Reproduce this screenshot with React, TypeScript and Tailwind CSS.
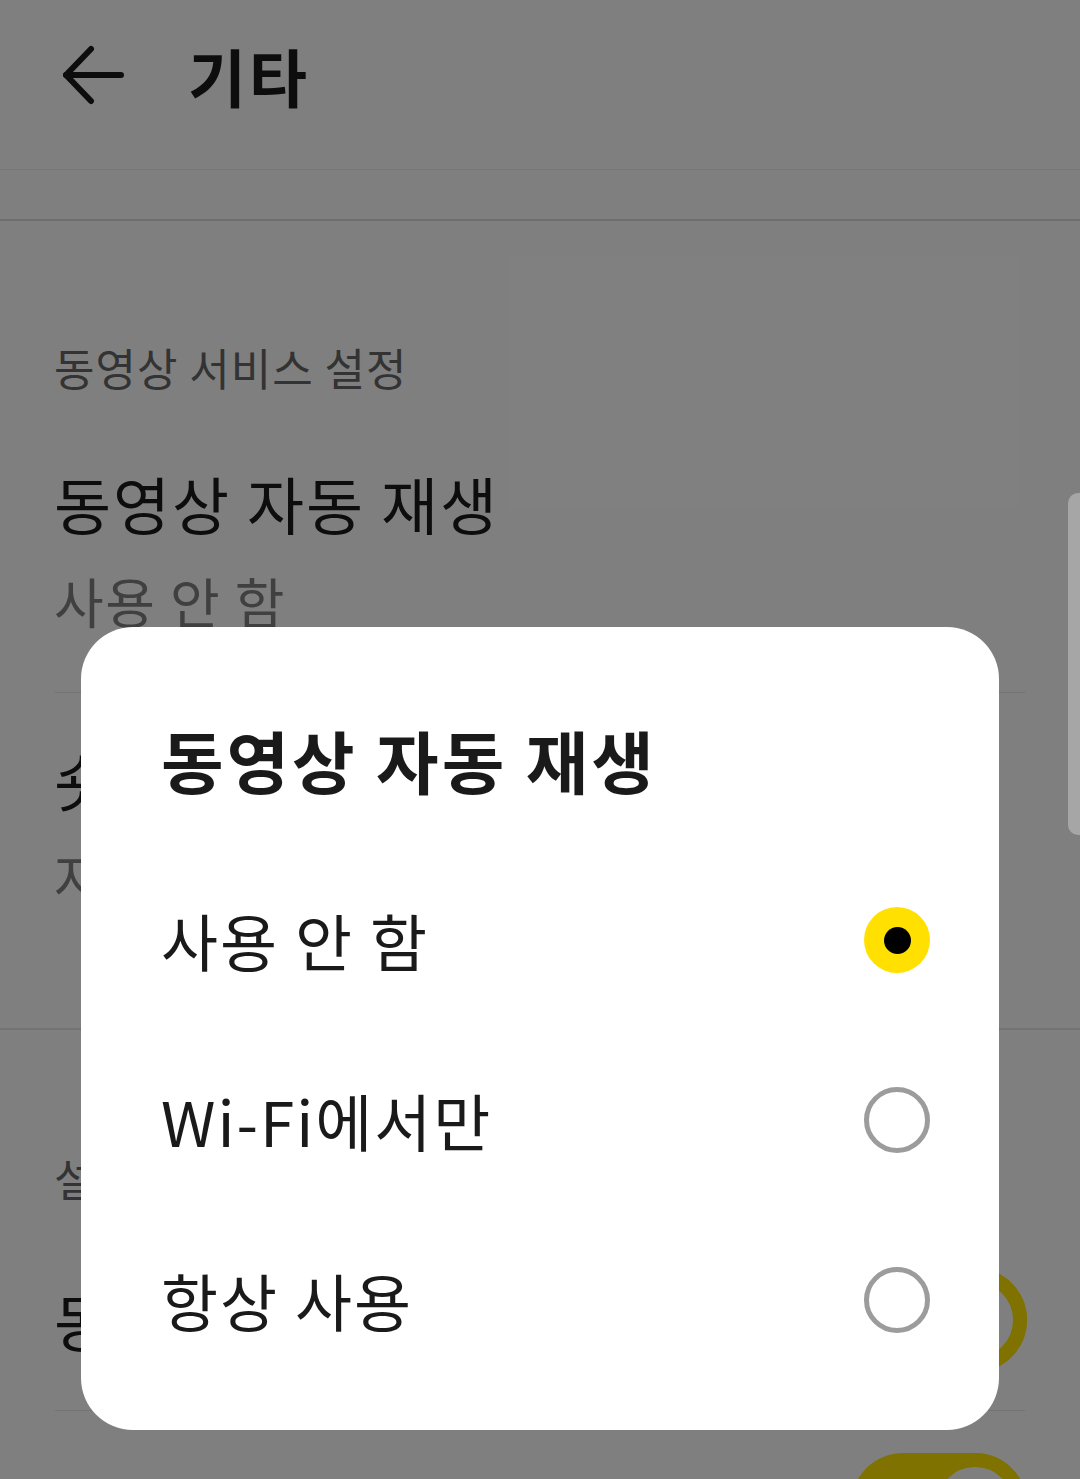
import React from 'react';

const options = ['사용 안 함', 'Wi-Fi에서만', '항상 사용'];

const BackArrow = () => (
  <svg width="62" height="60" viewBox="0 0 62 60" fill="none" stroke="#1a1a1a" strokeWidth="6" strokeLinecap="round" strokeLinejoin="round">
    <path d="M4 30H59" />
    <path d="M29 4L4 30L29 56" />
  </svg>
);

const Toggle = () => (
  <div className="relative w-[176px] h-[104px] rounded-full bg-[#fee500]">
    <div className="absolute right-0 top-0 w-[104px] h-[104px] rounded-full bg-white border-[14px] border-[#fee500]" />
  </div>
);

const Radio = ({ checked }: { checked: boolean }) =>
  checked ? (
    <div className="w-[66px] h-[66px] rounded-full bg-[#ffe000] flex items-center justify-center">
      <div className="w-[27px] h-[27px] rounded-full bg-black" />
    </div>
  ) : (
    <div className="w-[66px] h-[66px] rounded-full border-[5px] border-[#9c9c9c]" />
  );

export default function App() {
  return (
    <div className="relative w-[1080px] h-[1479px] overflow-hidden bg-white font-['Noto_Sans_CJK_KR',sans-serif]">
      {/* settings page underneath */}
      <div className="flex items-center h-[169px] pb-[20px] pl-[62px]">
        <BackArrow />
        <h1 className="ml-[64px] text-[63px] leading-none font-bold tracking-[3px] text-[#1a1a1a]">기타</h1>
      </div>
      <div className="h-px bg-[#eeeeee]" />
      <div className="h-[49px]" />
      <div className="h-[2px] bg-[#dddddd]" />

      <div className="px-[54px]">
        <p className="mt-[122px] text-[44px] leading-[48px] tracking-[1px] text-[#666666]">동영상 서비스 설정</p>
        <p className="mt-[76px] text-[62px] leading-[72px] tracking-[2px] text-[#1a1a1a]">동영상 자동 재생</p>
        <p className="mt-[32px] text-[54px] leading-[60px] tracking-[1.5px] text-[#808080]">사용 안 함</p>
      </div>
      <div className="mt-[61px] mx-[55px] h-px bg-[#e6e6e6]" />
      <div className="px-[54px]">
        <p className="mt-[51px] text-[62px] leading-[72px] tracking-[2px] text-[#1a1a1a]">숏폼 자동 재생</p>
        <p className="mt-[31px] text-[54px] leading-[60px] tracking-[1.5px] text-[#808080]">자동 재생 안 함</p>
      </div>
      <div className="mt-[121px] h-[2px] bg-[#e6e6e6]" />

      <div className="px-[54px]">
        <p className="mt-[124px] text-[44px] leading-[48px] tracking-[1px] text-[#666666]">설정 정보</p>
      </div>
      <div className="flex items-center justify-between h-[208px] pl-[54px] pr-[53px] pt-[28px]">
        <p className="text-[62px] leading-[72px] tracking-[2px] text-[#1a1a1a]">동영상 소리 켜기</p>
        <Toggle />
      </div>
      <div className="mx-[55px] h-px bg-[#e6e6e6]" />
      <div className="flex items-center justify-between h-[188px] pl-[54px] pr-[53px]">
        <p className="text-[62px] leading-[72px] tracking-[2px] text-[#1a1a1a]">동영상 미리보기</p>
        <Toggle />
      </div>

      {/* dim */}
      <div className="absolute inset-0 bg-black/50" />

      {/* edge handle */}
      <div className="absolute right-0 top-[493px] w-[12px] h-[342px] rounded-l-[10px] bg-[#a6a6a6]" />

      {/* dialog */}
      <div className="absolute left-[81px] top-[627px] w-[918px] rounded-[52px] bg-white pt-[93px] pb-[40px] pl-[80px] pr-[69px]">
        <h2 className="text-[68px] leading-[80px] font-bold tracking-[3px] text-[#1a1a1a]">동영상 자동 재생</h2>
        <div className="mt-[50px] flex flex-col">
          {options.map((o, i) => (
            <div key={o} className="flex items-center justify-between h-[180px]">
              <span className="text-[62px] leading-[72px] tracking-[2px] text-[#1a1a1a]">{o}</span>
              <Radio checked={i === 0} />
            </div>
          ))}
        </div>
      </div>
    </div>
  );
}
